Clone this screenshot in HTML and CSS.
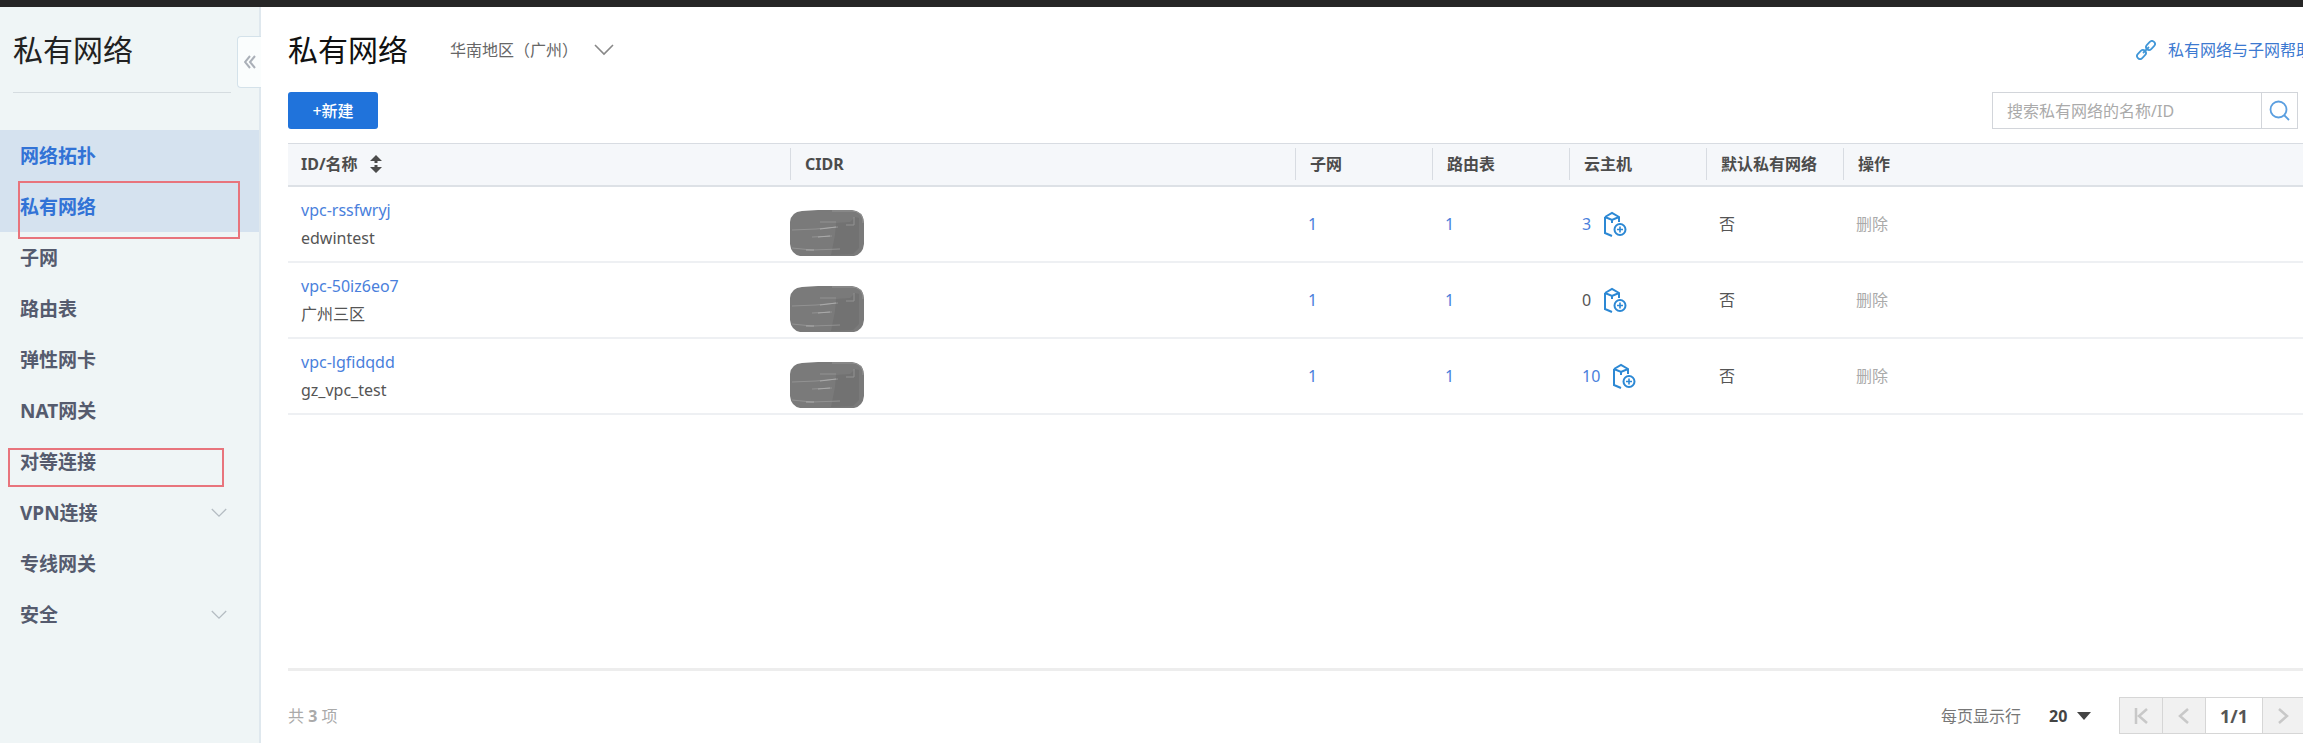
FILE: index.html
```html
<!DOCTYPE html>
<html lang="zh-CN">
<head>
<meta charset="utf-8">
<title>私有网络</title>
<link rel="stylesheet" href="styles.css">
</head>
<body>
<svg class="defs" aria-hidden="true">
  <symbol id="i-down" viewBox="0 0 20 12"><path d="M1 1l9 9 9-9" fill="none" stroke="currentColor" stroke-width="1.6"/></symbol>
  <symbol id="i-cube" viewBox="0 0 24 26"><path d="M2 6v16l7 3M2 6l7-4 7 4v5M2 6l7 3 7-3M9 9v3" fill="none" stroke="currentColor" stroke-width="2"/><circle cx="17" cy="18.500" r="5.500" fill="none" stroke="currentColor" stroke-width="2"/><path d="M17 15.500v6M14 18.500h6" stroke="currentColor" stroke-width="1.600"/></symbol>
  <symbol id="i-mask" viewBox="0 0 74 46"><path d="M12 1L28 0h34q11 1 12 12v22q-1 10-10 12H10Q1 44 0 34V12Q1 2 12 1z" fill="#7a7a7a"/><path d="M46 13l14-1 5-5 4 1v30l-6 6-22 1 4-20z" fill="#727272"/><path d="M42 1h20q8 0 11 8v4" fill="none" stroke="#949494"/><path d="M2 20l24-1 22-2M22 27l20-1M2 38l20 2 28-1M56 15h8v-8M30 12h16" fill="none" stroke="#929292"/><path d="M30 19l16-2M28 27l12-1M16 40h8" fill="none" stroke="#aaa"/></symbol>
</svg>
<div class="topbar"></div>
<div class="app">
  <aside class="side">
    <h2 class="side-title">私有网络</h2>
    <button class="collapse" aria-label="收起"><svg width="12" height="14" viewBox="0 0 12 14"><path d="M6 1L1 7l5 6M11 1L6 7l5 6" fill="none" stroke="currentColor" stroke-width="2"/></svg></button>
    <nav class="menu">
      <a class="item on" href="#">网络拓扑</a>
      <a class="item on" href="#">私有网络<span class="mark mark-a"></span></a>
      <a class="item" href="#">子网</a>
      <a class="item" href="#">路由表</a>
      <a class="item" href="#">弹性网卡</a>
      <a class="item" href="#">NAT网关</a>
      <a class="item" href="#">对等连接<span class="mark mark-b"></span></a>
      <a class="item" href="#">VPN连接<svg class="arrow"><use href="#i-down"/></svg></a>
      <a class="item" href="#">专线网关</a>
      <a class="item" href="#">安全<svg class="arrow"><use href="#i-down"/></svg></a>
    </nav>
  </aside>
  <main class="main">
    <header class="head">
      <h1 class="title">私有网络</h1>
      <button class="region">华南地区（广州）<svg class="region-arrow"><use href="#i-down"/></svg></button>
      <a class="help" href="#"><svg width="20" height="20" viewBox="0 0 20 20"><g fill="none" stroke="currentColor" stroke-width="1.800"><rect x="-5" y="-3" width="10" height="6" rx="3" transform="translate(5.500 14.500) rotate(-45)"/><rect x="-5" y="-3" width="10" height="6" rx="3" transform="translate(14.500 5.500) rotate(-45)"/><path d="M7 13l6-6"/></g></svg><span>私有网络与子网帮助</span></a>
    </header>
    <div class="tools">
      <button class="create">+新建</button>
      <form class="search">
        <input class="search-text" type="text" placeholder="搜索私有网络的名称/ID" aria-label="搜索私有网络的名称/ID">
        <button class="search-go" type="button" aria-label="搜索"><svg width="22" height="22" viewBox="0 0 22 22"><circle cx="9.500" cy="9.500" r="8" fill="none" stroke="currentColor" stroke-width="1.800"/><path d="M15 15l5 5" stroke="currentColor" stroke-width="1.800"/></svg></button>
      </form>
    </div>
    <table class="grid">
      <colgroup><col class="c-id"><col class="c-cidr"><col class="c-n"><col class="c-n"><col class="c-n"><col class="c-n"><col class="c-op"></colgroup>
      <thead><tr>
        <th><span class="th">ID/名称 <svg width="12" height="18" viewBox="0 0 12 18"><path d="M6 0l6 6H7.500v2h-3V6H0zM6 18l-6-6h4.500v-2h3v2H12z" fill="currentColor"/></svg></span></th>
        <th><span class="th">CIDR</span></th><th><span class="th">子网</span></th><th><span class="th">路由表</span></th><th><span class="th">云主机</span></th><th><span class="th">默认私有网络</span></th><th><span class="th">操作</span></th>
      </tr></thead>
      <tbody>
        <tr><td><a href="#">vpc-rssfwryj</a><div>edwintest</div></td><td><svg class="mask"><use href="#i-mask"/></svg></td><td><a href="#">1</a></td><td><a href="#">1</a></td><td><span class="host"><a href="#">3</a><svg class="cube"><use href="#i-cube"/></svg></span></td><td>否</td><td><button class="del" disabled>删除</button></td></tr>
        <tr><td><a href="#">vpc-50iz6eo7</a><div>广州三区</div></td><td><svg class="mask"><use href="#i-mask"/></svg></td><td><a href="#">1</a></td><td><a href="#">1</a></td><td><span class="host">0<svg class="cube"><use href="#i-cube"/></svg></span></td><td>否</td><td><button class="del" disabled>删除</button></td></tr>
        <tr><td><a href="#">vpc-lgfidqdd</a><div>gz_vpc_test</div></td><td><svg class="mask"><use href="#i-mask"/></svg></td><td><a href="#">1</a></td><td><a href="#">1</a></td><td><span class="host"><a href="#">10</a><svg class="cube"><use href="#i-cube"/></svg></span></td><td>否</td><td><button class="del" disabled>删除</button></td></tr>
      </tbody>
    </table>
    <footer class="foot">
      <span class="total">共 <b>3</b> 项</span>
      <label class="per" for="size">每页显示行</label>
      <span class="size-box"><select class="size" id="size"><option>20</option><option>50</option></select><svg class="caret" width="14" height="8" viewBox="0 0 14 8"><path d="M0 0h14L7 8z" fill="currentColor"/></svg></span>
      <div class="pager">
        <button class="pg" aria-label="首页"><svg width="14" height="16" viewBox="0 0 14 16"><path d="M2 0v16M13 1L5 8l8 7" fill="none" stroke="currentColor" stroke-width="2.500"/></svg></button>
        <button class="pg" aria-label="上一页"><svg width="14" height="16" viewBox="0 0 14 16"><path d="M11 1L3 8l8 7" fill="none" stroke="currentColor" stroke-width="2.500"/></svg></button>
        <span class="now">1/1</span>
        <button class="pg" aria-label="下一页"><svg width="14" height="16" viewBox="0 0 14 16"><path d="M3 1l8 7-8 7" fill="none" stroke="currentColor" stroke-width="2.500"/></svg></button>
      </div>
    </footer>
  </main>
</div>
</body>
</html>
```
FILE: styles.css
```css
* { box-sizing: border-box; }
body {
  margin: 0;
  min-height: 100vh;
  display: flex;
  flex-direction: column;
  overflow: hidden;
  font: 16px/28px "Noto Sans", "Noto Sans CJK SC", sans-serif;
  color: #555;
  background: #fff;
}
button, input, select { font: inherit; color: inherit; margin: 0; padding: 0; border: 0; background: none; border-radius: 0; }
a { color: #4a7fdc; text-decoration: none; }
h1, h2 { margin: 0; font-size: 30px; line-height: 40px; font-weight: 400; color: #222; }
.defs { position: absolute; width: 0; height: 0; }
.topbar { height: 7px; background: #262626; }
.app { flex: 1; display: flex; }

.side { position: relative; width: 261px; flex: none; padding-top: 23px; background: #eff5f6; border-right: 2px solid #dfe8ee; }
.side-title { margin: 0 28px 0 13px; padding: 0 0 22px; border-bottom: 1px solid #d5dce0; }
.collapse {
  position: absolute; top: 29px; right: -2px; width: 24px; height: 52px;
  display: flex; align-items: center; justify-content: center;
  background: #fafdfd; border: 1px solid #d4e2ea; border-right: 0; border-radius: 4px 0 0 4px; color: #aab0b8;
}
.menu { padding-top: 37px; }
.item { position: relative; display: flex; align-items: center; height: 51px; padding: 0 32px 0 20px; font-size: 19px; font-weight: 700; color: #555b6e; }
.item.on { background: #d5e2ef; color: #3273d6; }
.arrow { width: 16px; height: 10px; margin-left: auto; color: #b4bcc2; }
.mark { position: absolute; border: 2px solid #e8747c; pointer-events: none; }
.mark-a { left: 18px; top: 0; width: 222px; height: 58px; z-index: 1; }
.mark-b { left: 8px; top: 12px; width: 216px; height: 39px; }

.main { flex: 1; min-width: 0; display: flex; flex-direction: column; padding: 23px 0 0 27px; }
.head { display: flex; align-items: center; height: 40px; }
.title { color: #111; }
.region { display: flex; align-items: center; margin-left: 42px; color: #666; white-space: nowrap; }
.region-arrow { width: 20px; height: 12px; margin-left: 16px; color: #888; }
.help { display: flex; align-items: center; gap: 12px; margin: 0 -9px 0 auto; white-space: nowrap; color: #3c79d0; }
.help svg { flex: none; color: #4197d8; }
.tools { display: flex; justify-content: space-between; margin: 22px 5px 14px 0; }
.create { width: 90px; height: 37px; border-radius: 3px; background: #2073db; color: #fff; font-weight: 500; }
.search { display: flex; width: 306px; height: 37px; border: 1px solid #d2d5da; }
.search-text { flex: 1; min-width: 0; padding: 0 14px; outline: 0; }
.search-text::placeholder { color: #aaa; opacity: 1; }
.search-go { width: 36px; display: flex; align-items: center; justify-content: center; border-left: 1px solid #d2d5da; color: #5b9fe0; }

.grid { width: 100%; table-layout: fixed; border-collapse: collapse; }
.c-id { width: 502px; }
.c-cidr { width: 505px; }
.c-n { width: 137px; }
.grid th { height: 42px; padding: 0; text-align: left; background: #f5f7fa; border-top: 1px solid #d8dce2; border-bottom: 2px solid #dde1e6; color: #4c4c4c; }
.th { display: flex; align-items: center; gap: 12px; height: 32px; padding-left: 14px; white-space: nowrap; border-left: 1px solid #d8dce2; }
th:first-child .th { padding-left: 13px; border-left: 0; }
.grid td { height: 76px; padding: 0 0 0 13px; border-bottom: 2px solid #eef0f3; }
.mask { display: block; width: 74px; height: 46px; margin: 18px 0 0; }
.grid td:nth-child(2) { padding-left: 0; }
.host { display: flex; align-items: center; gap: 12px; }
.cube { width: 24px; height: 26px; color: #2c88d4; }
.del { color: #aaa; }

.foot { display: flex; align-items: center; margin-top: auto; padding: 26px 0 9px; border-top: 3px solid #ededed; }
.total { color: #aaa; }
.per { margin-left: auto; color: #777; }
.size-box { position: relative; display: flex; align-items: center; margin: 0 28px; }
.size { appearance: none; width: 42px; font-weight: 700; color: #444; outline: 0; }
.caret { position: absolute; right: 0; pointer-events: none; color: #444; }
.pager { display: flex; height: 37px; border: 1px solid #d6d6d6; border-right: 0; }
.pg { width: 43px; display: flex; align-items: center; justify-content: center; background: #f1f1f1; color: #c8c8c8; border-right: 1px solid #d6d6d6; }
.pg:last-child { width: 40px; border-right: 0; }
.now { width: 57px; display: flex; align-items: center; justify-content: center; font-weight: 700; font-size: 18px; border-right: 1px solid #d6d6d6; }
```
